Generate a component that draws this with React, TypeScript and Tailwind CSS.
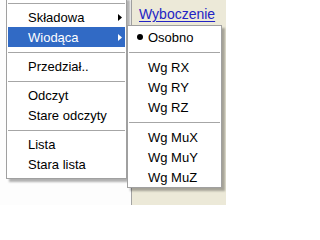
import React from "react";

type Entry = { kind: "item"; label: string; sub?: boolean; active?: boolean; bullet?: boolean } | { kind: "sep" };

const mainMenu: Entry[] = [
  { kind: "sep" },
  { kind: "item", label: "Składowa", sub: true },
  { kind: "item", label: "Wiodąca", sub: true, active: true },
  { kind: "sep" },
  { kind: "item", label: "Przedział.." },
  { kind: "sep" },
  { kind: "item", label: "Odczyt" },
  { kind: "item", label: "Stare odczyty" },
  { kind: "sep" },
  { kind: "item", label: "Lista" },
  { kind: "item", label: "Stara lista" },
];

const subMenu: Entry[] = [
  { kind: "item", label: "Osobno", bullet: true },
  { kind: "sep" },
  { kind: "item", label: "Wg RX" },
  { kind: "item", label: "Wg RY" },
  { kind: "item", label: "Wg RZ" },
  { kind: "sep" },
  { kind: "item", label: "Wg MuX" },
  { kind: "item", label: "Wg MuY" },
  { kind: "item", label: "Wg MuZ" },
];

function Arrow({ white }: { white?: boolean }) {
  return (
    <svg width="4" height="7" viewBox="0 0 4 7" className="shrink-0">
      <polygon points="0,0 4,3.5 0,7" fill={white ? "#ffffff" : "#000000"} />
    </svg>
  );
}

export default function App() {
  return (
    <div className="relative w-[226px] h-[205px] overflow-hidden flex font-['Liberation_Sans',Arial,sans-serif] text-[13px] text-black">
      {/* page behind the menus */}
      <div className="w-[131px] h-full bg-[#fdfdfd]" />
      <div className="flex-1 h-full bg-[#ece9d8] border-l border-[#a3a3a3] pl-[7px] pt-[5px]">
        <span className="leading-[15px] text-[14px] text-[#2323c4] underline underline-offset-[2px]">Wyboczenie</span>
      </div>

      {/* main context menu */}
      <div className="absolute left-[6px] top-[-3px] w-[121px] bg-white border border-[#a0a0a0] px-[1px] pb-[4px] shadow-[3px_3px_2px_rgba(0,0,0,0.3)]">
        {mainMenu.map((e, i) =>
          e.kind === "sep" ? (
            <div key={i} className="h-[9px] pt-[5px]">
              <div className="h-px bg-[#a6a6a6]" />
            </div>
          ) : (
            <div
              key={i}
              className={`h-[20px] flex items-center justify-between pl-[20px] pr-[3px] ${
                e.active ? "bg-[#316ac5] text-white" : ""
              }`}
            >
              <span className="leading-[15px]">{e.label}</span>
              {e.sub && <Arrow white={e.active} />}
            </div>
          )
        )}
      </div>

      {/* submenu */}
      <div className="absolute left-[127px] top-[25px] w-[95px] bg-white border border-[#a0a0a0] px-[1px] pt-[1px] shadow-[3px_3px_2px_rgba(0,0,0,0.3)]">
        {subMenu.map((e, i) =>
          e.kind === "sep" ? (
            <div key={i} className="h-[10px] pt-[5px]">
              <div className="h-px bg-[#a6a6a6]" />
            </div>
          ) : (
            <div key={i} className="h-[20px] flex items-center pl-[8px]">
              <span className="w-[11px] flex items-center">
                {e.bullet && <span className="w-[6px] h-[6px] rounded-full bg-black" />}
              </span>
              <span className="leading-[15px]">{e.label}</span>
            </div>
          )
        )}
      </div>
    </div>
  );
}
